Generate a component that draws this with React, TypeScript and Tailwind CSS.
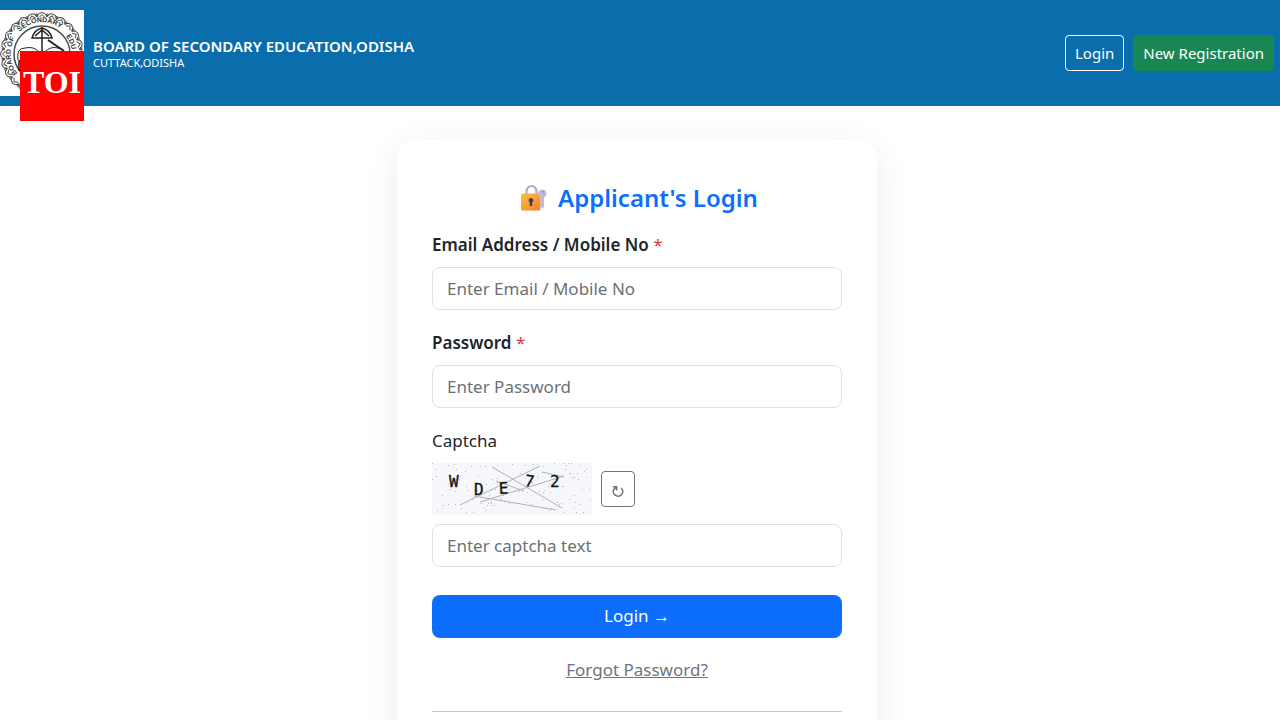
import { useId, useState } from 'react';
import type { FormEvent } from 'react';

type FieldProps = {
  autoComplete: string;
  label: string;
  placeholder: string;
  type?: string;
  value: string;
  onChange: (value: string) => void;
};

const inputClassName =
  'block h-[43px] w-full rounded-lg border border-[#dee2e6] bg-white px-3.5 text-[17px] text-[#212529] placeholder:text-[#6c7075] focus:border-[#86b7fe] focus:outline-none focus:ring-4 focus:ring-[#0d6efd]/25';

const captchaGlyphs = [
  { char: 'W', x: 17, y: 24, rotate: 0 },
  { char: 'D', x: 42, y: 32, rotate: 0 },
  { char: 'E', x: 67, y: 31, rotate: -3 },
  { char: '7', x: 92, y: 23, rotate: 8 },
  { char: '2', x: 118, y: 24, rotate: 0 },
];

const captchaLines = [
  [28, 42, 108, 3],
  [60, 4, 130, 45],
  [48, 39, 132, 13],
  [42, 33, 124, 47],
  [64, 18, 92, 28],
  [110, 9, 132, 14],
];

const captchaDots = Array.from({ length: 130 }, (_, index) => ({
  x: (index * 61 + ((index * index) % 17) * 7) % 160,
  y: (index * 29 + ((index * index) % 13) * 5) % 52,
}));

const sealScallops = Array.from({ length: 24 }, (_, index) => index * 15);

function BoardSeal() {
  return (
    <svg aria-label="Board seal" className="h-[86px] w-[84px] shrink-0 bg-white" role="img" viewBox="0 0 84 86">
      <defs>
        <path d="M17.5 63.5 A31 31 0 0 1 17.5 24.5" id="seal-left" />
        <path d="M15 29 A30 30 0 0 1 69 29" id="seal-top" />
        <path d="M66 26 A30 30 0 0 1 72 44" id="seal-right" />
      </defs>
      <g fill="none" stroke="#4a4a4a" strokeWidth="1">
        {sealScallops.map((angle) => (
          <g key={angle} transform={`rotate(${angle} 42 44)`}>
            <path d="M36.5 7 L39 3.5 L42 2.5 L45 3.5 L47.5 7" />
            <path d="M39 7.5 L42 4.5 L45 7.5" />
            <circle cx="47" cy="5" r="1" />
          </g>
        ))}
        <circle cx="42" cy="44" r="28" strokeWidth="1.5" />
      </g>
      <g className="font-['Liberation_Sans'] font-bold" fill="#333" fontSize="7">
        <text>
          <textPath href="#seal-left">BOARD OF</textPath>
        </text>
        <text>
          <textPath href="#seal-top" startOffset="46%" textAnchor="middle">
            SECONDARY
          </textPath>
        </text>
        <text>
          <textPath href="#seal-right">EDU</textPath>
        </text>
      </g>
      <g fill="none" stroke="#222" strokeWidth="1.5">
        <path d="M42 17 V43 M32 28 Q34 20 42 18 Q50 20 52 28 Z M35 26 L42 20 L49 26" />
        <path d="M48 30 L64 41" strokeWidth="2" />
        <path d="M18 50 Q16 38 25 38 Q34 36 39 42 M45 42 Q50 36 58 38 Q66 39 66 50" strokeWidth="1" />
        <path d="M19 51 Q31 46 42 52 Q53 46 65 51 V60 H19 Z" />
      </g>
    </svg>
  );
}

function LockIcon() {
  return (
    <svg aria-hidden="true" className="h-7 w-7 shrink-0" viewBox="0 0 28 28">
      <defs>
        <linearGradient id="lock-body" x1="0" x2="1" y1="0" y2="1">
          <stop offset="0" stopColor="#fcc13d" />
          <stop offset="1" stopColor="#f47d35" />
        </linearGradient>
      </defs>
      <path d="M6.5 12 V7.5 a5 5.5 0 0 1 10 0 V12" fill="none" stroke="#b4acbb" strokeWidth="2.2" />
      <rect fill="url(#lock-body)" height="17" rx="1.5" width="19.5" x="1" y="9.5" />
      <g fill="#c5b6d5">
        <path d="M21 12 h3 v11 l-1.5 1.5 -2.5 -2 Z" />
        <circle cx="22.3" cy="9.8" r="4.2" />
      </g>
      <circle cx="23.2" cy="7.8" fill="#9c8bb0" r="1" />
      <path d="M11 14 a2.3 2.3 0 0 1 1.2 4.3 V22 h-2.4 v-3.7 a2.3 2.3 0 0 1 1.2 -4.3 Z" fill="#493c50" />
    </svg>
  );
}

function RefreshIcon() {
  return (
    <svg aria-hidden="true" className="h-3.5 w-3.5" fill="none" stroke="currentColor" viewBox="0 0 14 14">
      <path d="M10.2 4 A4.7 4.7 0 1 1 3.2 4.8 L5 3.2" strokeWidth="1.6" />
      <path d="M2 2.8 H5.6 V6.4" strokeWidth="1.6" />
    </svg>
  );
}

function CaptchaImage() {
  return (
    <svg aria-label="Captcha" className="h-[52px] w-40 shrink-0 bg-[#f6f7fb]" role="img" viewBox="0 0 160 52">
      <g fill="#b9bbc0">
        {captchaDots.map((dot, index) => (
          <rect height="1" key={index} width="1" x={dot.x} y={dot.y} />
        ))}
      </g>
      <g stroke="#b2b2b4" strokeWidth="1">
        {captchaLines.map(([x1, y1, x2, y2]) => (
          <line key={`${x1}-${y1}`} x1={x1} x2={x2} y1={y1} y2={y2} />
        ))}
      </g>
      <g className="font-['DejaVu_Sans_Mono']" fill="#111" fontSize="16" stroke="#111" strokeWidth="0.3">
        {captchaGlyphs.map((glyph) => (
          <text key={glyph.char} transform={`rotate(${glyph.rotate} ${glyph.x} ${glyph.y})`} x={glyph.x} y={glyph.y}>
            {glyph.char}
          </text>
        ))}
      </g>
    </svg>
  );
}

function Field({ autoComplete, label, placeholder, type = 'text', value, onChange }: FieldProps) {
  const id = useId();

  return (
    <div className="mb-[19px]">
      <label className="mb-2 block text-[17px] leading-7 font-semibold" htmlFor={id}>
        {label} <span className="font-normal text-[#dc3545]">*</span>
      </label>
      <input
        autoComplete={autoComplete}
        className={inputClassName}
        id={id}
        placeholder={placeholder}
        type={type}
        value={value}
        onChange={(event) => onChange(event.target.value)}
      />
    </div>
  );
}

function SiteHeader() {
  return (
    <header className="relative flex items-center justify-between bg-[#0a6dac] py-2.5 pr-1.5 text-white">
      <div className="flex items-center gap-[9px]">
        <BoardSeal />
        <div>
          <p className="text-[15px] leading-5 font-semibold">BOARD OF SECONDARY EDUCATION,ODISHA</p>
          <p className="text-[11px] leading-[14px]">CUTTACK,ODISHA</p>
        </div>
      </div>
      <nav className="flex gap-[9px] text-[15px]">
        <a className="flex h-9 items-center rounded border border-white px-[9px]" href="#login">
          Login
        </a>
        <a className="flex h-9 items-center rounded bg-[#198754] px-2.5" href="#register">
          New Registration
        </a>
      </nav>
      <div className="absolute top-[51px] left-5 flex h-[70px] w-16 items-center justify-center bg-[#ff0000] pb-2 font-['Liberation_Serif'] text-[32px] leading-none font-bold">
        TOI
      </div>
    </header>
  );
}

export default function App() {
  const [login, setLogin] = useState('');
  const [password, setPassword] = useState('');
  const [captcha, setCaptcha] = useState('');

  const handleSubmit = (event: FormEvent<HTMLFormElement>) => {
    event.preventDefault();
  };

  return (
    <div className="min-h-screen bg-white font-['Noto_Sans','Open_Sans',sans-serif] text-[#212529]">
      <SiteHeader />
      <main className="pt-[34px] pr-1.5">
        <section className="mx-auto w-full max-w-[480px] rounded-[18px] bg-white px-[35px] pt-10 pb-9 shadow-[0_8px_34px_rgba(0,0,0,0.08)]">
          <h1 className="mb-[15px] flex items-center justify-center gap-2.5 pl-1 text-2xl leading-9 font-semibold text-[#0d6efd]">
            <LockIcon />
            Applicant&apos;s Login
          </h1>

          <form noValidate onSubmit={handleSubmit}>
            <Field
              autoComplete="username"
              label="Email Address / Mobile No"
              placeholder="Enter Email / Mobile No"
              value={login}
              onChange={setLogin}
            />
            <Field
              autoComplete="current-password"
              label="Password"
              placeholder="Enter Password"
              type="password"
              value={password}
              onChange={setPassword}
            />

            <label className="mb-2 block text-[17px] leading-7" htmlFor="captcha">
              Captcha
            </label>
            <div className="mb-[9px] flex items-center gap-[9px]">
              <CaptchaImage />
              <button
                aria-label="Refresh captcha"
                className="flex h-9 w-[34px] items-center justify-center rounded border border-[#6c757d] pt-1 text-[#6c757d]"
                type="button"
                onClick={() => setCaptcha('')}
              >
                <RefreshIcon />
              </button>
            </div>
            <input
              autoComplete="off"
              className={inputClassName}
              id="captcha"
              placeholder="Enter captcha text"
              type="text"
              value={captcha}
              onChange={(event) => setCaptcha(event.target.value)}
            />

            <button
              className="mt-7 block h-[43px] w-full rounded-lg bg-[#0d6efd] text-[17px] text-white hover:bg-[#0b5ed7]"
              type="submit"
            >
              Login <span className="font-['Liberation_Sans']">→</span>
            </button>
          </form>

          <p className="mt-[18px] text-center text-[17px] leading-7">
            <a className="text-[#6c757d] underline" href="#forgot-password">
              Forgot Password?
            </a>
          </p>
          <hr className="mt-[27px] border-[#c8cacc]" />
        </section>
      </main>
    </div>
  );
}
